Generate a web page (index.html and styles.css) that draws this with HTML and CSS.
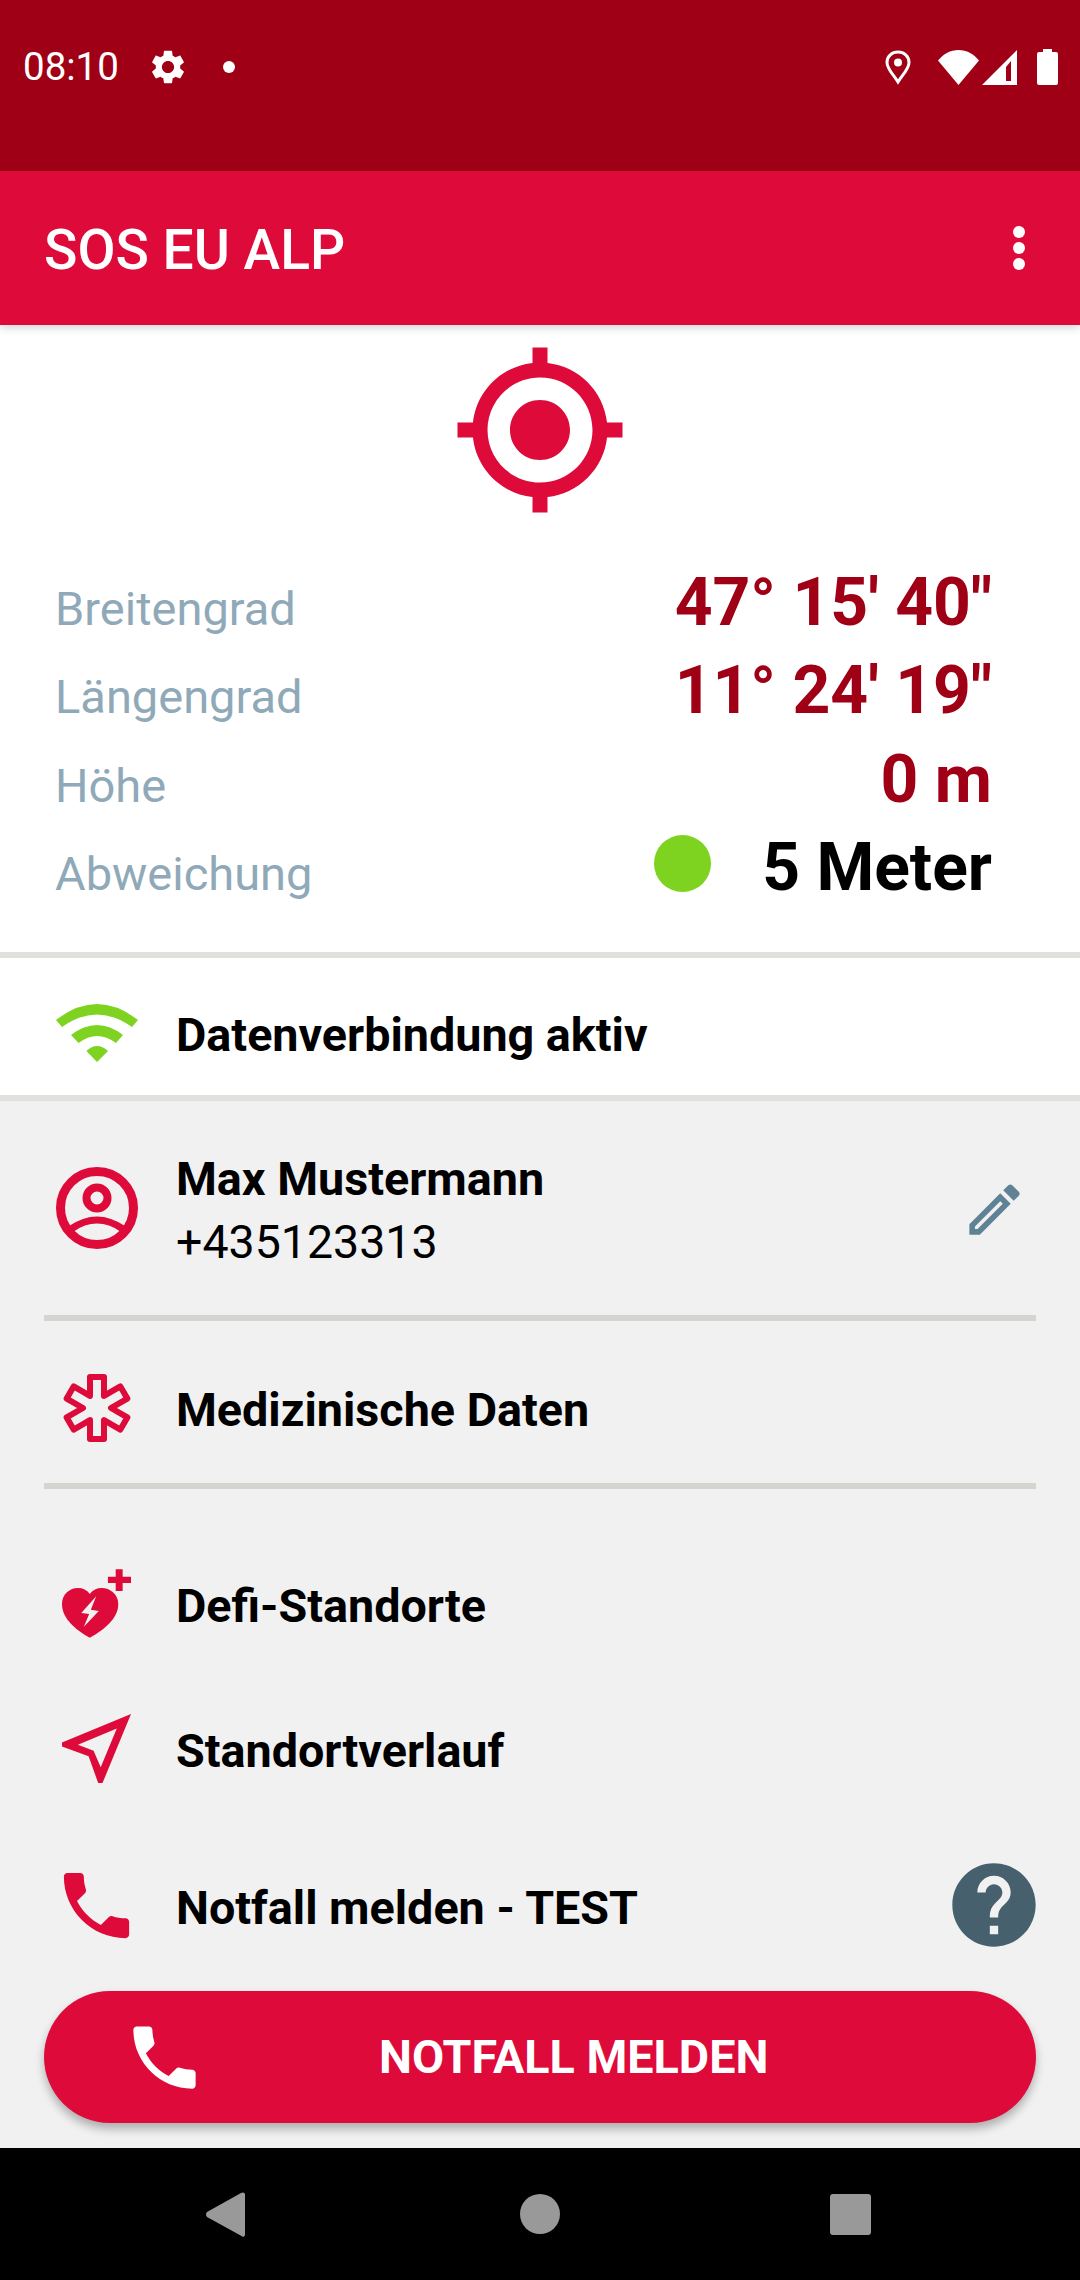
FILE: index.html
```html
<!DOCTYPE html>
<html lang="de">
<head>
<meta charset="utf-8">
<title>SOS EU ALP</title>
<link rel="stylesheet" href="styles.css">
</head>
<body>
<div class="phone">
  <header class="status">
    <span class="time">08:10</span>
    <svg class="st-gear" viewBox="2 2 20 20"><path fill="#fff" d="M19.14 12.94c.04-.3.06-.61.06-.94 0-.32-.02-.64-.07-.94l2.03-1.58c.18-.14.23-.41.12-.61l-1.92-3.32c-.12-.22-.37-.29-.59-.22l-2.39.96c-.5-.38-1.03-.7-1.62-.94l-.36-2.54c-.04-.24-.24-.41-.48-.41h-3.84c-.24 0-.43.17-.47.41l-.36 2.54c-.59.24-1.13.57-1.62.94l-2.39-.96c-.22-.08-.47 0-.59.22L2.74 8.87c-.12.21-.08.47.12.61l2.03 1.58c-.05.3-.09.63-.09.94s.02.64.07.94l-2.03 1.58c-.18.14-.23.41-.12.61l1.92 3.32c.12.22.37.29.59.22l2.39-.96c.5.38 1.03.7 1.62.94l.36 2.54c.05.24.24.41.48.41h3.84c.24 0 .44-.17.47-.41l.36-2.54c.59-.24 1.13-.56 1.62-.94l2.39.96c.22.08.47 0 .59-.22l1.92-3.32c.12-.22.07-.47-.12-.61l-2.01-1.58zM12 15.6c-1.98 0-3.6-1.62-3.6-3.6s1.62-3.6 3.6-3.6 3.6 1.62 3.6 3.6-1.62 3.6-3.6 3.6z"/></svg>
    <span class="st-dot"></span>
    <span class="st-spacer"></span>
    <svg class="st-pin" viewBox="0 0 26 35"><path fill="none" stroke="#fff" stroke-width="3" d="M13 32C8 24 2 19 2 12.5 2 6 7 2 13 2s11 4 11 10.5C24 19 18 24 13 32z"/><circle cx="13" cy="12.5" r="4" fill="#fff"/></svg>
    <svg class="st-wifi" viewBox="0 0 41 35"><path fill="#fff" d="M0 10.5C5.5 4 12.5 0 20.5 0S35.500 4 41 10.500L20.500 35z"/></svg>
    <svg class="st-signal" viewBox="0 0 35 35"><path fill="#fff" fill-rule="evenodd" d="M0 35 35 0v35zM24 17v14h5V11z"/></svg>
    <svg class="st-batt" viewBox="0 0 21 36"><path fill="#fff" d="M6 0h9v3h4a2 2 0 0 1 2 2v29a2 2 0 0 1-2 2H2a2 2 0 0 1-2-2V5a2 2 0 0 1 2-2h4z"/></svg>
  </header>

  <div class="appbar">
    <h1 class="appbar-title">SOS EU ALP</h1>
    <div class="kebab"><span></span><span></span><span></span></div>
  </div>

  <section class="position">
    <svg class="target" viewBox="0 0 24 24"><path d="M12 8c-2.21 0-4 1.79-4 4s1.790 4 4 4 4-1.790 4-4-1.790-4-4-4zm8.940 3c-.46-4.170-3.770-7.480-7.940-7.940V1h-2v2.060C6.830 3.520 3.520 6.830 3.060 11H1v2h2.060c.46 4.170 3.770 7.480 7.940 7.940V23h2v-2.060c4.170-.46 7.480-3.770 7.940-7.940H23v-2h-2.060zM12 19c-3.870 0-7-3.130-7-7s3.130-7 7-7 7 3.130 7 7-3.130 7-7 7z"/></svg>
    <div class="coords">
      <div class="coord"><span class="coord-label">Breitengrad</span><span class="coord-value">47° 15' 40"</span></div>
      <div class="coord"><span class="coord-label">Längengrad</span><span class="coord-value">11° 24' 19"</span></div>
      <div class="coord"><span class="coord-label">Höhe</span><span class="coord-value">0 m</span></div>
      <div class="coord"><span class="coord-label">Abweichung</span><span class="coord-dot"></span><span class="coord-value coord-black">5 Meter</span></div>
    </div>
  </section>

  <div class="band">
    <div class="row row-conn">
      <div class="row-icon">
        <svg class="i-wifi" viewBox="0 0 82 58"><path fill="#7ed321" d="M0 16Q41-16 82 16l-6 7Q41-2 6 23zM15 31Q41 11 67 31l-7 8Q41 25 22.600 39zM30.400 47Q41 37 52 47L41 58z"/></svg>
      </div>
      <span class="row-text">Datenverbindung aktiv</span>
    </div>
  </div>

  <main class="list">
    <div class="row row-person">
      <div class="row-icon">
        <svg class="i-person" viewBox="0 0 82 82"><circle cx="41" cy="41" r="36.500" fill="none" stroke="#dd0a3a" stroke-width="9"/><circle cx="41" cy="31" r="10.500" fill="none" stroke="#dd0a3a" stroke-width="8"/><path fill="none" stroke="#dd0a3a" stroke-width="7" d="M15 62Q41 44 67 62"/></svg>
      </div>
      <div class="person-text">
        <span class="row-text">Max Mustermann</span>
        <span class="person-phone">+435123313</span>
      </div>
      <svg class="i-edit" viewBox="0 0 24 24"><path d="M14.060 9.020l.92.92L5.920 19H5v-.92l9.060-9.060M17.660 3c-.25 0-.51.1-.7.29l-1.830 1.830 3.750 3.750 1.830-1.830c.39-.39.39-1.020 0-1.410l-2.340-2.340c-.2-.2-.45-.29-.71-.29zm-3.600 3.190L3 17.250V21h3.750L17.810 9.940l-3.750-3.750z"/></svg>
    </div>
    <hr class="rule">
    <div class="row row-med">
      <div class="row-icon">
        <svg class="i-med" viewBox="-34 -34 68 68"><polygon fill="none" stroke="#dd0a3a" stroke-width="6" stroke-linejoin="round" points="-7,-31 7,-31 7,-12.120 23.350,-21.560 30.350,-9.440 14,0 30.350,9.440 23.350,21.560 7,12.120 7,31 -7,31 -7,12.120 -23.350,21.560 -30.350,9.440 -14,0 -30.350,-9.440 -23.350,-21.560 -7,-12.120"/></svg>
      </div>
      <span class="row-text">Medizinische Daten</span>
    </div>
    <hr class="rule">
    <div class="row row-defi">
      <div class="row-icon">
        <svg class="i-defi" viewBox="0 0 69.400 69"><path fill="#dd0a3a" d="M28 69C14 61 0 50 0 35 0 25 8 19 16 19c5 0 9 2 12 6 3-4 7-6 12-6 8 0 16.600 6 16.600 16C56.600 50 42 61 28 69z"/><path fill="#f1f1f1" d="M34.400 27.300 19.400 44l7.900 1L22 58l15-16-8-1.200z"/><path fill="#dd0a3a" d="M54 0h7v7.500h8.400V14H61v8h-7v-8h-7.800V7.500H54z"/></svg>
      </div>
      <span class="row-text row-text-low">Defi-Standorte</span>
    </div>
    <div class="row row-track">
      <div class="row-icon">
        <svg class="i-track" viewBox="62 1715 69 69"><path fill="#dd0a3a" fill-rule="evenodd" d="M131 1715 62 1743.400v4l26.600 9.800 9.600 26.800h4.300zM116.800 1729.600 100.700 1768.300 93.600 1751.700 77.900 1745.800z"/></svg>
      </div>
      <span class="row-text row-text-low">Standortverlauf</span>
    </div>
    <div class="row row-call">
      <div class="row-icon">
        <svg class="i-phone" viewBox="0 0 24 24"><path fill="#dd0a3a" d="M6.620 10.790c1.440 2.830 3.760 5.140 6.590 6.590l2.200-2.200c.27-.27.67-.36 1.020-.24 1.120.37 2.330.57 3.570.57.55 0 1 .45 1 1V20c0 .55-.45 1-1 1-9.390 0-17-7.610-17-17 0-.55.45-1 1-1h3.500c.55 0 1 .45 1 1 0 1.250.2 2.450.57 3.570.11.35.03.74-.25 1.020l-2.200 2.200z"/></svg>
      </div>
      <span class="row-text row-text-low">Notfall melden - TEST</span>
      <svg class="i-help" viewBox="0 0 24 24"><path fill="#46606e" d="M12 2C6.480 2 2 6.480 2 12s4.480 10 10 10 10-4.480 10-10S17.520 2 12 2zm1 17h-2v-2h2v2zm2.070-7.750l-.9.92C13.450 12.900 13 13.500 13 15h-2v-.5c0-1.100.45-2.100 1.170-2.830l1.240-1.260c.37-.36.59-.86.59-1.410 0-1.100-.9-2-2-2s-2 .9-2 2H8c0-2.210 1.790-4 4-4s4 1.790 4 4c0 .88-.36 1.680-.93 2.250z"/></svg>
    </div>
    <button class="sos" type="button">
      <svg class="i-sos" viewBox="0 0 24 24"><path fill="#fff" d="M6.620 10.790c1.440 2.830 3.760 5.140 6.590 6.590l2.200-2.200c.27-.27.67-.36 1.020-.24 1.120.37 2.330.57 3.570.57.55 0 1 .45 1 1V20c0 .55-.45 1-1 1-9.390 0-17-7.610-17-17 0-.55.45-1 1-1h3.500c.55 0 1 .45 1 1 0 1.250.2 2.450.57 3.570.11.35.03.74-.25 1.020l-2.200 2.200z"/></svg>
      <span class="sos-text">NOTFALL MELDEN</span>
    </button>
  </main>

  <nav class="navbar">
    <svg class="nav-back" viewBox="0 0 39 45"><path fill="#999" d="M37 0.500a2 2 0 0 1 2 1.500v41a2 2 0 0 1-3.500 1L1 25a4 4 0 0 1 0-5L35 1z"/></svg>
    <span class="nav-home"></span>
    <span class="nav-recent"></span>
  </nav>
</div>
</body>
</html>
```

FILE: styles.css
```css
* { box-sizing: border-box; }
html, body { margin: 0; padding: 0; }
body { font-family: Roboto, "Liberation Sans", sans-serif; background: #f1f1f1; }
.phone { width: 1080px; height: 2280px; display: flex; flex-direction: column; overflow: hidden; }

.status { height: 171px; flex: none; background: #a00016; display: flex; align-items: flex-start; padding: 49px 22px 0 23px; color: #fff; }
.time { font-size: 38.500px; line-height: 36px; width: 94px; flex: none; }
.st-gear { width: 34px; height: 34px; margin: 1px 0 0 34px; }
.st-dot { width: 12px; height: 12px; border-radius: 50%; background: #fff; margin: 12px 0 0 38px; }
.st-spacer { flex: 1; }
.st-pin { width: 26px; height: 35px; margin-top: 1px; }
.st-wifi { width: 41px; height: 35px; margin: 1px 0 0 27px; }
.st-signal { width: 35px; height: 35px; margin: 1px 0 0 3px; }
.st-batt { width: 21px; height: 36px; margin: 0 0 0 20px; }

.appbar { height: 154px; flex: none; background: #dd0a3a; display: flex; align-items: center; justify-content: space-between; padding: 0 55px 0 44px; position: relative; z-index: 1; box-shadow: 0 3px 8px rgba(0,0,0,.16); }
.appbar-title { margin: 3px 0 0; font-size: 55.200px; font-weight: 500; color: #fff; }
.kebab { display: flex; flex-direction: column; gap: 4px; margin-top: -1px; }
.kebab span { width: 12px; height: 12px; border-radius: 50%; background: #fff; }

.position { height: 627px; flex: none; background: #fff; display: flex; flex-direction: column; align-items: center; padding-top: 15px; }
.target { width: 180px; height: 180px; fill: #dd0a3a; flex: none; }
.coords { width: 100%; padding: 44px 88px 0 55px; display: flex; flex-direction: column; }
.coord { display: flex; align-items: baseline; height: 88.300px; }
.coord-label { font-size: 47px; color: #8fa9b9; flex: 1; }
.coord-value { font-size: 66px; font-weight: 700; color: #a00016; }
.coord-black { color: #000; }
.coord-dot { width: 57px; height: 57px; border-radius: 50%; background: #7ed321; margin-right: 51px; align-self: flex-start; margin-top: 6px; }

.band { flex: none; background: #fff; border-top: 6px solid #e0e0dc; border-bottom: 6px solid #e0e0dc; height: 149px; }
.row { display: flex; align-items: center; padding: 0 44px; }
.row-conn { height: 137px; padding-top: 15px; }
.row-conn .row-text { padding-top: 2px; }
.row-icon { width: 105px; margin-right: 27px; display: flex; justify-content: center; align-items: center; flex: none; }
.row-text { font-size: 46.700px; font-weight: 700; color: #000; }
.row-text-low { padding-top: 6px; }

.list { flex: 1; background: #f1f1f1; display: flex; flex-direction: column; }
.i-wifi { width: 82px; height: 58px; display: block; margin-top: -2px; }
.row-person { height: 214px; padding-top: 2px; }
.i-person { width: 82px; height: 82px; display: block; margin-top: -2px; }
.person-text { flex: 1; display: flex; flex-direction: column; padding-top: 3px; }
.person-text .row-text { line-height: 62px; }
.person-phone { font-size: 46.500px; line-height: 64px; color: #000; }
.i-edit { width: 67px; height: 67px; fill: #5f8394; margin-right: 8px; flex: none; }
.rule { height: 6px; border: 0; margin: 0 44px; background: #d4d4d0; flex: none; }
.row-med { height: 162px; padding-top: 12px; }
.row-med .row-text { padding-top: 3px; }
.i-med { width: 68px; height: 68px; display: block; }
.row-defi { height: 146px; padding-top: 41px; box-sizing: content-box; }
.i-defi { width: 69px; height: 69px; display: block; }
.row-track { height: 146px; padding-bottom: 2px; }
.i-track { width: 69px; height: 69px; display: block; }
.row-call { height: 169px; padding-bottom: 3px; }
.i-phone { width: 87px; height: 87px; display: block; }
.row-call .row-text { flex: 1; }
.i-help { width: 100px; height: 100px; margin-right: -8px; flex: none; }

.sos { margin: 0 44px; height: 132px; border: 0; border-radius: 66px; background: #dd0a3a; box-shadow: 0 6px 10px rgba(0,0,0,.28); display: flex; align-items: center; padding: 0 0 0 79px; flex: none; font-family: inherit; }
.i-sos { width: 83px; height: 83px; flex: none; }
.sos-text { font-size: 46.700px; font-weight: 700; color: #fff; margin-left: 173px; }

.navbar { height: 132px; flex: none; background: #000; display: flex; align-items: center; padding: 0 209px 0 206px; justify-content: space-between; }
.nav-back { width: 39px; height: 45px; }
.nav-home { width: 40px; height: 40px; border-radius: 50%; background: #999; margin-left: 5px; }
.nav-recent { width: 41px; height: 41px; border-radius: 3px; background: #999; }
```
